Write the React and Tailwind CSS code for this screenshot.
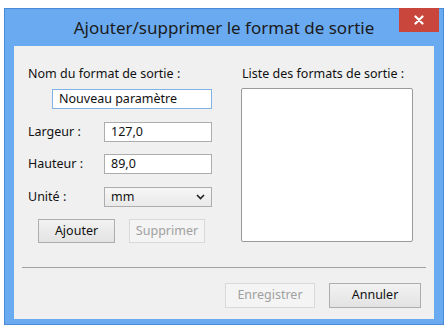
import React from 'react';

const font = { fontFamily: '"Noto Sans", "Open Sans", sans-serif' };

function Field({ label, value, className = '' }) {
  return (
    <div className={`flex items-center h-[20px] ${className}`}>
      <span className="w-[90px] pl-[14px]">{label}</span>
      <div className="w-[108px] h-[20px] bg-white border border-[#adadad] flex items-center pl-[6px]">
        {value}
      </div>
    </div>
  );
}

function Btn({ children, disabled, className = '' }) {
  return (
    <div
      className={`flex items-center justify-center border ${
        disabled
          ? 'border-[#d9d9d9] bg-[#f4f4f4] text-[#a0a0a0]'
          : 'border-[#adadad] bg-gradient-to-b from-[#f2f2f2] to-[#e3e3e3] text-[#111]'
      } ${className}`}
    >
      {children}
    </div>
  );
}

export default function App() {
  return (
    <div className="w-[448px] h-[329px] bg-white pt-[8px] pl-[4px]" style={font}>
      <div className="w-[440px] h-[317px] bg-[#6aaaf0] border border-[#4a8ad8] flex flex-col px-[9px] pb-[5px]">
        <div className="relative h-[37px] flex items-center justify-center">
          <span className="text-[17px] text-[#1b1b1b]">
            Ajouter/supprimer le format de sortie
          </span>
          <div className="absolute right-[-5px] top-[-1px] w-[40px] h-[24px] bg-[#c9463d] flex items-center justify-center">
            <svg width="10" height="10" viewBox="0 0 10 10">
              <path d="M1.5 1.5 L8.5 8.5 M8.5 1.5 L1.5 8.5" stroke="white" strokeWidth="2.2" strokeLinecap="round" />
            </svg>
          </div>
        </div>
        <div className="flex-1 bg-[#f0f0f0] text-[12.5px] text-[#111] flex flex-col">
          <div className="flex pt-[19px]">
            <div className="w-[220px] flex flex-col">
              <span className="pl-[14px] leading-[18px]">Nom du format de sortie :</span>
              <div className="mt-[6px] ml-[38px] w-[160px] h-[20px] bg-white border border-[#7eb4ea] flex items-center pl-[6px]">
                Nouveau paramètre
              </div>
              <Field className="mt-[13px]" label="Largeur :" value="127,0" />
              <Field className="mt-[12px]" label="Hauteur :" value="89,0" />
              <div className="mt-[13px] flex items-center h-[20px]">
                <span className="w-[90px] pl-[14px]">Unité :</span>
                <div className="w-[108px] h-[20px] border border-[#adadad] bg-gradient-to-b from-[#f7f7f7] to-[#e9e9e9] flex items-center justify-between pl-[6px] pr-[6px]">
                  <span>mm</span>
                  <svg width="9" height="6" viewBox="0 0 9 6">
                    <path d="M1 1 L4.5 4.5 L8 1" stroke="#222" strokeWidth="1.6" fill="none" />
                  </svg>
                </div>
              </div>
              <div className="mt-[12px] flex gap-[14px] pl-[24px]">
                <Btn className="w-[77px] h-[24px]">Ajouter</Btn>
                <Btn disabled className="w-[76px] h-[24px]">Supprimer</Btn>
              </div>
            </div>
            <div className="flex flex-col">
              <span className="pl-[8px] leading-[18px]">Liste des formats de sortie :</span>
              <div className="mt-[5px] ml-[7px] w-[172px] h-[154px] bg-white border border-[#9a9a9a] rounded-[2px]"></div>
            </div>
          </div>
          <div className="mt-[24px] mx-[8px] h-[2px] border-t border-[#a0a0a0] border-b-white"></div>
          <div className="flex justify-end gap-[14px] pr-[13px] mt-[14px]">
            <Btn disabled className="w-[90px] h-[25px]">Enregistrer</Btn>
            <Btn className="w-[92px] h-[25px]">Annuler</Btn>
          </div>
        </div>
      </div>
    </div>
  );
}
